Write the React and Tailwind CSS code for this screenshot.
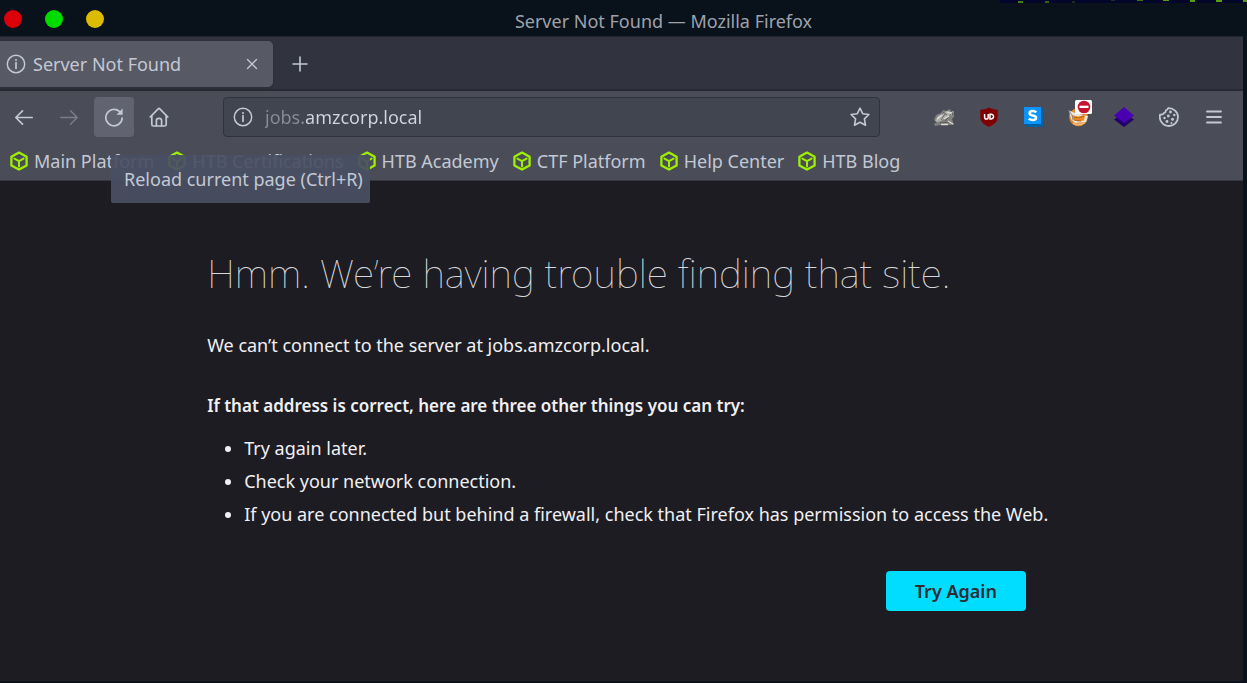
import React from "react";

const bookmarks = [
  "Main Platform",
  "HTB Certifications",
  "HTB Academy",
  "CTF Platform",
  "Help Center",
  "HTB Blog",
];

const tips = [
  "Try again later.",
  "Check your network connection.",
  "If you are connected but behind a firewall, check that Firefox has permission to access the Web.",
];

function InfoIcon() {
  return (
    <svg viewBox="0 0 20 20" className="size-5 shrink-0" fill="none" stroke="currentColor" aria-hidden="true">
      <circle cx="10" cy="10" r="8.7" strokeWidth="1.5" />
      <path d="M10 8.7v5.6" strokeWidth="1.7" strokeLinecap="round" />
      <circle cx="10" cy="5.9" r="1" fill="currentColor" stroke="none" />
    </svg>
  );
}

function CubeIcon() {
  return (
    <svg viewBox="0 0 20 20" className="size-5 shrink-0 text-[#9fef00]" fill="none" stroke="currentColor" strokeWidth="2.3" strokeLinejoin="round" aria-hidden="true">
      <path d="M10 1.6 17.6 5.8v8.6L10 18.6 2.4 14.4V5.8Z" />
      <path d="M5.4 7.6 10 10.2l4.6-2.6M10 10.2v5.2" strokeWidth="2" strokeLinecap="round" />
    </svg>
  );
}

function BackIcon() {
  return (
    <svg viewBox="0 0 20 20" className="size-5" fill="none" stroke="currentColor" strokeWidth="1.7" strokeLinecap="round" strokeLinejoin="round" aria-hidden="true">
      <path d="M18.2 10.5H2M8.5 3.8 1.8 10.5l6.7 6.7" />
    </svg>
  );
}

function ForwardIcon() {
  return (
    <svg viewBox="0 0 20 20" className="size-5" fill="none" stroke="currentColor" strokeWidth="1.4" strokeLinecap="round" strokeLinejoin="round" aria-hidden="true">
      <path d="M1.8 10.5H18M11.5 3.8l6.7 6.7-6.7 6.7" />
    </svg>
  );
}

function ReloadIcon() {
  return (
    <svg viewBox="0 0 20 20" className="size-5" fill="none" stroke="currentColor" strokeWidth="1.7" strokeLinecap="round" aria-hidden="true">
      <path d="M15.6 4.6A8.2 8.2 0 1 0 18.2 11" />
      <path d="M18.6 1.6v6.1h-6.1Z" fill="currentColor" stroke="none" />
    </svg>
  );
}

function HomeIcon() {
  return (
    <svg viewBox="0 0 20 20" className="size-5" fill="none" stroke="currentColor" strokeWidth="1.7" strokeLinecap="round" strokeLinejoin="round" aria-hidden="true">
      <path d="M1.2 10 9.2 1.8q.8-.8 1.6 0L18.8 10" />
      <path d="M2.8 8.6v8.8q0 1.6 1.6 1.6h11.2q1.6 0 1.6-1.6V8.6" />
      <path d="M7.4 18.6v-5q0-2.2 2.6-2.2t2.6 2.2v5" />
    </svg>
  );
}

function StarIcon() {
  return (
    <svg viewBox="0 0 20 20" className="size-5" fill="none" stroke="currentColor" strokeWidth="1.6" strokeLinejoin="round" aria-hidden="true">
      <path d="M10 1.2 12.7 6.7l6.2.8-4.5 4.4 1.1 6.3L10 15.2l-5.5 3 1.1-6.3L1.1 7.5l6.2-.8Z" />
    </svg>
  );
}

function FoxIcon() {
  return (
    <svg viewBox="0 0 22 18" className="h-[18px] w-[22px]" aria-hidden="true">
      <path d="M1 12 3 7l5-2 2-3 3 1 4-2 1 2h3v6l-2 2 2 6H7l-5 1-1-2 3-2Z" fill="#80807e" />
      <path d="M2 13 5 8l5-2 3-3 4 2 3-2-1 4-3 2-4 1-4 3-4 1Z" fill="#b1b1ac" />
      <path d="M8 12l4-6M12 13l7-8M10 4l4 3M7 15l9-1M18 3l2 4" fill="none" stroke="#4f5250" strokeWidth=".8" />
      <path d="M4 11l5-4M11 11l5-3M8 16.500h7M15 13l5 3M14 4l5 1" fill="none" stroke="#dddcd4" strokeWidth="1.300" />
    </svg>
  );
}

function ShieldIcon() {
  return (
    <svg viewBox="0 0 20 20" className="size-5" aria-hidden="true">
      <path d="M10 .6c2.500 1.500 5.300 2 8.700 2.100v7.300c0 5-3.700 7.600-8.700 9.800-5-2.200-8.700-4.800-8.700-9.800V2.700C4.700 2.600 7.500 2.100 10 .6Z" fill="#800000" />
      <path d="M5.600 7v3.300q0 1.800 1.800 1.800T9.200 10.300V7M11 7.200v4.700h.8q2.700 0 2.700-2.400T11.800 7.200Z" fill="none" stroke="#fff" strokeWidth="1.500" />
    </svg>
  );
}

function BlockIcon() {
  return (
    <svg viewBox="0 0 20 20" className="size-5" aria-hidden="true">
      <path d="M17 0l3 3v17H3l-3-3Z" fill="#005f9e" />
      <path d="M0 0h17v17H0Z" fill="#0b94fb" />
      <path d="M12.300 5.300Q11 4 8.600 4 5.600 4 5.600 6.300q0 1.700 3 2.200 3.500.4 3.500 2.300 0 2.200-3.300 2.200-2.500 0-4-1.400" fill="none" stroke="#fff" strokeWidth="2.500" />
    </svg>
  );
}

function ProxyIcon() {
  return (
    <svg viewBox="0 0 26 34" className="h-[34px] w-[26px]" aria-hidden="true">
      <circle cx="12.500" cy="17" r="9.300" fill="#e08a32" />
      <path d="M3 10.500 9 13l13 3-2 6-11 1-4-4Z" fill="#e9e5df" />
      <path d="M6 15l6 1.500 7-1.500-1 5.500-6 1-5-2Z" fill="#f08c22" />
      <path d="M8 17.500l5 .5 5-2M8 20l7 1" stroke="#b5631a" strokeWidth="1.200" fill="none" />
      <path d="M2.500 10.500 6 15l1 5" stroke="#8a8580" strokeWidth="1" fill="none" />
      <path d="M7 23.500q6 2.500 12-1" stroke="#f7bd7c" strokeWidth="1.500" fill="none" />
      <rect x="9" y="0" width="17" height="14" rx="1.500" fill="#fff" />
      <circle cx="18" cy="7" r="6.300" fill="#c41631" />
      <rect x="13.500" y="5.700" width="9" height="2.300" fill="#fff" />
    </svg>
  );
}

function LayersIcon() {
  return (
    <svg viewBox="0 0 20 20" className="size-5" aria-hidden="true">
      <path d="M10 5.500 20 12.500 10 20 0 12.500Z" fill="#22006b" />
      <path d="M10 0 20 8.500 10 16 0 8.500Z" fill="#4a00b0" />
    </svg>
  );
}

function CookieIcon() {
  return (
    <svg viewBox="0 0 20 20" className="size-5" fill="none" stroke="currentColor" strokeWidth="1.800" strokeLinejoin="round" aria-hidden="true">
      <path d="M9.200 1.100Q8.600 3.300 6.800 3.400 7 5.600 5 5.900 4.600 7.900 1 7.600 0 12.300 2.800 15.500 5.600 19 10 19c5 0 9-4 9-9s-4.500-9.200-9.800-8.900Z" />
      <g fill="currentColor" stroke="none">
        <circle cx="11.500" cy="5" r="1.400" />
        <circle cx="15.300" cy="8" r="1.200" />
        <circle cx="9.300" cy="9" r="1.400" />
        <circle cx="5.500" cy="11" r="1.200" />
        <circle cx="13.500" cy="12.300" r="1.500" />
        <circle cx="8" cy="14.500" r="1.400" />
        <circle cx="12.500" cy="16" r="1" />
      </g>
    </svg>
  );
}

function MenuIcon() {
  return (
    <svg viewBox="0 0 20 20" className="size-5" stroke="currentColor" strokeWidth="1.800" strokeLinecap="round" aria-hidden="true">
      <path d="M3 4.500h14M3 10h14M3 15.500h14" />
    </svg>
  );
}

const extensions = [
  { label: "FoxyProxy", Icon: FoxIcon },
  { label: "uBlock", Icon: ShieldIcon },
  { label: "Sidebar", Icon: BlockIcon },
  { label: "Proxy switcher", Icon: ProxyIcon },
  { label: "Wappalyzer", Icon: LayersIcon },
  { label: "Cookies", Icon: CookieIcon },
  { label: "Menu", Icon: MenuIcon },
];

function Backdrop() {
  return (
    <svg className="absolute top-0 right-0 h-[3px] w-[247px]" viewBox="0 0 247 3" aria-hidden="true">
      <rect width="247" height="3" fill="#03052a" />
      <g fill="#4fa00c">
        <rect x="18" y="1" width="5" height="2" opacity=".8" />
        <rect x="45" y="1" width="4" height="2" opacity=".6" />
        <rect x="72" y="1" width="3" height="2" opacity=".25" />
        <rect x="111" y="0" width="4" height="1" opacity=".3" />
        <rect x="137" y="0" width="6" height="1" opacity=".7" />
        <rect x="163" y="0" width="6" height="1" />
        <rect x="190" y="0" width="5" height="2" />
        <rect x="216" y="0" width="6" height="2" />
        <rect x="243" y="0" width="4" height="2" />
      </g>
    </svg>
  );
}

export default function App() {
  return (
    <div className="relative flex min-h-screen flex-col bg-[#09111b] pr-1 pb-0.5 font-['Noto_Sans',sans-serif] text-lg text-[#c3c8d4]">
      <Backdrop />
      <header className="flex h-9 shrink-0 items-center">
        <div className="flex flex-1 gap-[23px] pt-0.5 pl-1">
          <button aria-label="Close window" className="size-[18px] rounded-full bg-[#dc0009]" />
          <button aria-label="Minimize window" className="size-[18px] rounded-full bg-[#00dc00]" />
          <button aria-label="Maximize window" className="size-[18px] rounded-full bg-[#dcbc00]" />
        </div>
        <p className="pt-1.5 pl-20 text-[#9da2ab]">Server Not Found — Mozilla Firefox</p>
        <div className="flex-1" />
      </header>

      <div className="flex h-[55px] shrink-0 items-center border-t border-b-2 border-t-[#22272f] border-b-[#272a32] bg-[#31343e] pt-0.5">
        <div className="flex h-[46px] w-[273px] items-center rounded-r-[5px] bg-[#575965] pr-[13px] pl-1.5 shadow">
          <InfoIcon />
          <span className="flex-1 pl-[7px]">Server Not Found</span>
          <button aria-label="Close tab" className="flex size-4 items-center justify-center">
            <svg viewBox="0 0 12 12" className="size-3" stroke="currentColor" strokeWidth="1.300" strokeLinecap="round" aria-hidden="true">
              <path d="M1.500 1.500l9 9M10.500 1.500l-9 9" />
            </svg>
          </button>
        </div>
        <button aria-label="New tab" className="ml-[19px]">
          <svg viewBox="0 0 16 16" className="size-4" stroke="currentColor" strokeWidth="1.600" strokeLinecap="round" aria-hidden="true">
            <path d="M8 1v14M1 8h14" />
          </svg>
        </button>
      </div>

      <nav className="flex h-[51px] shrink-0 items-center bg-[#4a4d58]" aria-label="Navigation">
        <div className="flex items-center gap-[5px] pl-1">
          <button aria-label="Back" className="flex size-10 items-center justify-center"><BackIcon /></button>
          <button aria-label="Forward" disabled className="flex size-10 items-center justify-center text-[#7b7e89]"><ForwardIcon /></button>
          <div className="relative">
            <button aria-label="Reload" className="flex size-10 items-center justify-center rounded bg-[#616470]"><ReloadIcon /></button>
            <div role="tooltip" className="absolute top-[58px] left-[17px] z-10 flex h-12 w-[259px] items-center rounded-xs bg-[#495063]/93 px-[13px] whitespace-nowrap">
              Reload current page (Ctrl+R)
            </div>
          </div>
          <button aria-label="Home" className="flex size-10 items-center justify-center"><HomeIcon /></button>
        </div>
        <div className="ml-11 flex h-10 flex-1 items-center gap-3 rounded border border-[#2f333d] bg-[#40454f] px-[9px]">
          <InfoIcon />
          <input
            type="text"
            aria-label="Address"
            defaultValue="jobs.amzcorp.local"
            className="min-w-0 flex-1 bg-[linear-gradient(to_right,#888c96_41px,#d2d6e0_41px)] bg-clip-text text-transparent outline-none"
          />
          <button aria-label="Bookmark this page"><StarIcon /></button>
        </div>
        <div className="flex items-center gap-[5px] pr-[9px] pl-11">
          {extensions.map(({ label, Icon }) => (
            <button key={label} aria-label={label} className="flex size-10 items-center justify-center">
              <Icon />
            </button>
          ))}
        </div>
      </nav>

      <ul className="flex h-[39px] shrink-0 items-center gap-[13px] border-b border-[#343741] bg-[#4a4d58] pl-[9px]">
        {bookmarks.map((name) => (
          <li key={name}>
            <a href="#" className="flex items-center gap-[5px] whitespace-nowrap">
              <CubeIcon />
              {name}
            </a>
          </li>
        ))}
      </ul>

      <main className="flex-1 bg-[#1d1c22] text-[#f0f0f4]">
        <div className="mx-auto w-2/3 pt-16">
          <h1 className="text-[39px] leading-[56px] font-thin whitespace-nowrap text-[#d8d8dc]">Hmm. We’re having trouble finding that site.</h1>
          <p className="pt-[30px]">We can’t connect to the server at jobs.amzcorp.local.</p>
          <p className="pt-[33px] text-[17px] leading-7 font-semibold">If that address is correct, here are three other things you can try:</p>
          <ul className="list-disc pt-3 pl-[37px] leading-[33px]">
            {tips.map((tip) => (
              <li key={tip} className="whitespace-nowrap">{tip}</li>
            ))}
          </ul>
          <div className="flex justify-end pt-10 pr-2.5">
            <button className="h-10 w-[140px] rounded bg-[#00ddff] font-semibold text-[#2b2a33]">Try Again</button>
          </div>
        </div>
      </main>
    </div>
  );
}
